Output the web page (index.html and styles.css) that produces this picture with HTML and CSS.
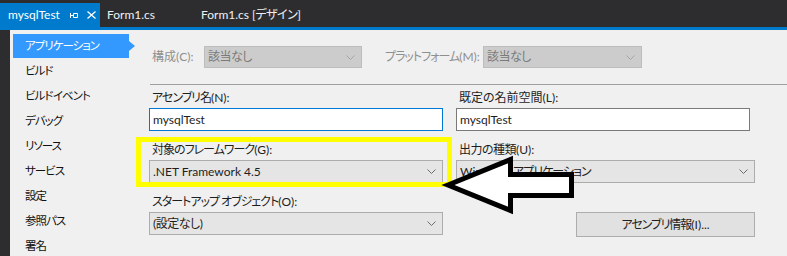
FILE: index.html
```html
<!DOCTYPE html>
<html lang="ja">
<head>
<meta charset="utf-8">
<title>mysqlTest</title>
<link rel="stylesheet" href="styles.css">
</head>
<body>
<div class="window">
  <div class="tabbar">
    <div class="tab tab-active">
      <span class="tab-title">mysqlTest</span>
      <svg class="pin" width="8" height="7" viewBox="0 0 8 7"><path d="M0.5 1v5M0.5 3.5h3M3.5 1.5h4v4h-4z" fill="none" stroke="#ffffff" stroke-width="1"/></svg>
      <svg class="close" width="9" height="8" viewBox="0 0 9 8"><path d="M0.5 0.5l8 7M8.5 0.5l-8 7" fill="none" stroke="#ffffff" stroke-width="1.3"/></svg>
    </div>
    <div class="tab tab-form">Form1.cs</div>
    <div class="tab tab-design">Form1.cs <span class="jp">[デザイン]</span></div>
  </div>
  <div class="tabline"></div>
  <div class="main">
    <div class="edge"></div>
    <ul class="nav">
      <li class="nav-item nav-selected">アプリケーション</li>
      <li class="nav-item">ビルド</li>
      <li class="nav-item">ビルド&#8201;イベント</li>
      <li class="nav-item">デバッグ</li>
      <li class="nav-item">リソース</li>
      <li class="nav-item">サービス</li>
      <li class="nav-item">設定</li>
      <li class="nav-item">参照パス</li>
      <li class="nav-item">署名</li>
    </ul>
    <section class="content">
      <div class="cfg-row">
        <span class="label label-disabled cfg-label1">構成(C):</span>
        <div class="combo combo-disabled cfg-combo1"><span class="jp">該当なし</span><svg class="chev" width="9" height="5" viewBox="0 0 9 5"><polyline points="0.5,0.5 4.5,4.5 8.5,0.5" fill="none" stroke="#a6a6a6"/></svg></div>
        <span class="label label-disabled cfg-label2"><span class="kana">プラットフォーム</span>(M):</span>
        <div class="combo combo-disabled cfg-combo2"><span class="jp">該当なし</span><svg class="chev" width="9" height="5" viewBox="0 0 9 5"><polyline points="0.5,0.5 4.5,4.5 8.5,0.5" fill="none" stroke="#a6a6a6"/></svg></div>
      </div>
      <div class="separator"></div>
      <div class="grid">
        <div class="group">
          <div class="label"><span class="kana">アセンブリ名</span>(N):</div>
          <div class="textbox textbox-focus">mysqlTest</div>
        </div>
        <div class="group">
          <div class="label">既定の名前空間(L):</div>
          <div class="textbox textbox-narrow">mysqlTest</div>
        </div>
        <div class="group">
          <div class="label"><span class="kana">対象のフレームワーク</span>(G):</div>
          <div class="combo"><span>.NET Framework 4.5</span><svg class="chev" width="9" height="5" viewBox="0 0 9 5"><polyline points="0.5,0.5 4.5,4.5 8.5,0.5" fill="none" stroke="#6d6d6d"/></svg></div>
        </div>
        <div class="group">
          <div class="label"><span class="jp">出力の種類</span>(U):</div>
          <div class="combo"><span>Windows <span class="kana">アプリケーション</span></span><svg class="chev" width="9" height="5" viewBox="0 0 9 5"><polyline points="0.5,0.5 4.5,4.5 8.5,0.5" fill="none" stroke="#6d6d6d"/></svg></div>
        </div>
        <div class="group">
          <div class="label"><span class="kana">スタートアップ オブジェクト</span>(O):</div>
          <div class="combo"><span class="jp">(設定なし)</span><svg class="chev" width="9" height="5" viewBox="0 0 9 5"><polyline points="0.5,0.5 4.5,4.5 8.5,0.5" fill="none" stroke="#6d6d6d"/></svg></div>
        </div>
        <div class="group group-button">
          <button class="button" type="button"><span class="kana">アセンブリ情報</span>(I)...</button>
        </div>
      </div>
    </section>
  </div>
  <svg class="annot" width="787" height="256" viewBox="0 0 787 256">
    <rect x="138.5" y="139.5" width="311" height="45" fill="none" stroke="#ffff00" stroke-width="5"/>
    <polygon points="448,185 510.5,159.5 510.5,174.5 571.5,174.5 571.5,195.5 510.5,195.5 510.5,210.5" fill="#ffffff" stroke="#000000" stroke-width="5" stroke-linejoin="miter"/>
  </svg>
</div>
</body>
</html>
```

FILE: styles.css
```css
* {
  box-sizing: border-box;
}

html, body {
  margin: 0;
  padding: 0;
}

body {
  width: 787px;
  height: 256px;
  overflow: hidden;
  background: #f0f0f0;
  font-family: Lato, "Noto Sans CJK JP", sans-serif;
  font-size: 12px;
  line-height: 16px;
  color: #1e1e1e;
  font-feature-settings: "palt" 1;
}

.window {
  position: relative;
  width: 787px;
  height: 256px;
  display: flex;
  flex-direction: column;
  overflow: hidden;
}

.jp {
  letter-spacing: -0.5px;
}

.kana {
  letter-spacing: -1px;
}

.tabbar {
  flex: none;
  height: 27px;
  background: #2d2d30;
  display: flex;
  align-items: flex-end;
  padding-top: 3px;
}

.tab {
  height: 24px;
  display: flex;
  align-items: center;
  color: #f1f1f1;
  font-size: 12px;
  padding-bottom: 1px;
  white-space: pre;
}

.tab-active {
  width: 100px;
  background: #007acc;
  color: #ffffff;
  padding-left: 8px;
}

.tab-title {
  width: 62px;
}

.pin {
  display: block;
  margin-top: 1px;
}

.close {
  display: block;
  margin-left: 9px;
}

.tab-form {
  width: 94px;
  padding-left: 7px;
}

.tab-design {
  padding-left: 7px;
}

.tabline {
  flex: none;
  height: 3px;
  background: #007acc;
}

.main {
  flex: 1 1 auto;
  min-height: 0;
  display: flex;
  overflow: hidden;
}

.edge {
  width: 10px;
  background: #2d2d30;
}

.nav {
  list-style: none;
  margin: 0 0 0 3px;
  padding: 4px 0 0 0;
  width: 123px;
  font-size: 11.5px;
  letter-spacing: -1px;
}

.nav-item {
  height: 25px;
  line-height: 24px;
  padding-left: 12px;
  color: #111111;
  white-space: nowrap;
}

.nav-selected {
  position: relative;
  width: 116px;
  height: 24px;
  margin-bottom: 1px;
  background: #3399ff;
  color: #ffffff;
}

.nav-selected::after {
  content: "";
  position: absolute;
  right: -6px;
  top: 7px;
  border-top: 5px solid transparent;
  border-bottom: 5px solid transparent;
  border-left: 6px solid #3399ff;
}

.content {
  flex: 1;
  padding: 16px 0 0 13px;
}

.cfg-row {
  display: flex;
  align-items: center;
  height: 22px;
}

.label {
  padding-left: 3px;
  height: 18px;
  line-height: 16px;
  white-space: nowrap;
}

.label-disabled {
  color: #8f8f8f;
  height: auto;
}

.cfg-label1 {
  flex: none;
  width: 55px;
}

.cfg-label2 {
  flex: none;
  width: 101px;
  margin-left: 20px;
}

.combo {
  height: 23px;
  display: flex;
  align-items: center;
  justify-content: space-between;
  padding: 0 6px 0 3px;
  background: #e5e5e5;
  border: 1px solid #acacac;
  color: #1e1e1e;
  white-space: nowrap;
}

.combo-disabled {
  flex: none;
  height: 22px;
  background: #cccccc;
  border-color: #bdbdbd;
  color: #7a7a7a;
}

.cfg-combo1 {
  width: 158px;
}

.cfg-combo2 {
  width: 159px;
}

.chev {
  display: block;
  flex: none;
}

.separator {
  height: 1px;
  margin: 16px 0 0 1px;
  background: #a0a0a0;
}

.grid {
  display: grid;
  grid-template-columns: 294px 299px;
  column-gap: 13px;
  row-gap: 11px;
  margin-top: 5px;
}

.textbox {
  height: 23px;
  line-height: 21px;
  padding-left: 3px;
  background: #ffffff;
  border: 1px solid #7a7a7a;
  color: #1e1e1e;
}

.textbox-focus {
  border-color: #0078d7;
}

.textbox-narrow {
  width: 294px;
}

.group-button {
  display: flex;
  justify-content: flex-end;
  padding-top: 18px;
}

.button {
  width: 179px;
  height: 25px;
  margin: 0;
  padding: 0;
  background: #e1e1e1;
  border: 1px solid #adadad;
  font: inherit;
  color: #1e1e1e;
}

.annot {
  position: absolute;
  left: 0;
  top: 0;
  pointer-events: none;
}
```
